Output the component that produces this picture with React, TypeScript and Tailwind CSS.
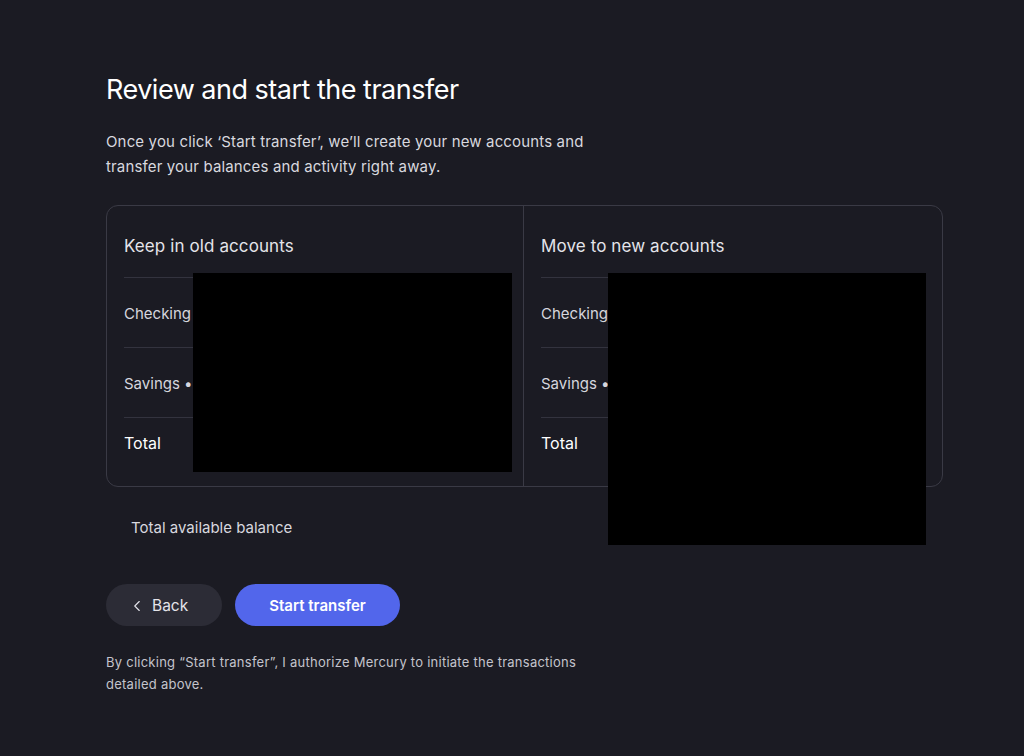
import { ChevronLeft } from 'lucide-react'

const rows = ['Checking', 'Savings •']

function Column({ title, bordered }: { title: string; bordered?: boolean }) {
  return (
    <div className={`px-[17px] ${bordered ? 'border-l border-[#3a3a45]' : ''}`}>
      <div className="h-[71px] flex items-center pt-[11px] text-[17px] tracking-[0.1px] text-[#e4e4ea]">{title}</div>
      {rows.map((r) => (
        <div key={r} className="h-[70px] flex items-center pt-[4px] border-t border-[#33333e] text-[15px] text-[#d6d6de]">
          {r}
        </div>
      ))}
      <div className="h-[69px] pt-[13px] border-t border-[#33333e] text-[16px] text-white">Total</div>
    </div>
  )
}

export default function App() {
  return (
    <main className="relative min-h-[756px] w-[1024px] bg-[#1b1b23] font-['Inter',sans-serif] px-[106px] pt-[73px]">
      <h1 className="text-[27px] leading-[34px] text-white tracking-[-0.5px]">Review and start the transfer</h1>

      <p className="mt-[22px] w-[510px] text-[15px] leading-[25px] tracking-[0.15px] text-[#d8d8df]">
        Once you click ‘Start transfer’, we’ll create your new accounts and transfer your balances and activity right away.
      </p>

      <div className="mt-[26px] w-[837px] grid grid-cols-[416px_1fr] border border-[#3a3a45] rounded-[12px]">
        <Column title="Keep in old accounts" />
        <Column title="Move to new accounts" bordered />
      </div>

      <div className="mt-[30px] pl-[25px] text-[15px] text-[#d8d8df]">Total available balance</div>

      <div className="mt-[44px] flex gap-[13px]">
        <button className="h-[42px] w-[116px] rounded-full bg-[#2c2c36] text-[15.5px] text-[#e4e4ea] flex items-center pl-[22px] pt-[2px] gap-[6px]">
          <ChevronLeft size={18} strokeWidth={1.5} />
          Back
        </button>
        <button className="h-[42px] w-[165px] rounded-full bg-[#5266eb] pt-[3px] text-[15px] font-semibold text-white">
          Start transfer
        </button>
      </div>

      <p className="mt-[25px] w-[500px] text-[13px] leading-[22px] tracking-[0.25px] text-[#c4c4cc]">
        By clicking “Start transfer”, I authorize Mercury to initiate the transactions detailed above.
      </p>

      {/* redacted amounts */}
      <div className="absolute left-[193px] top-[273px] w-[319px] h-[199px] bg-black" />
      <div className="absolute left-[608px] top-[273px] w-[318px] h-[272px] bg-black" />
    </main>
  )
}
